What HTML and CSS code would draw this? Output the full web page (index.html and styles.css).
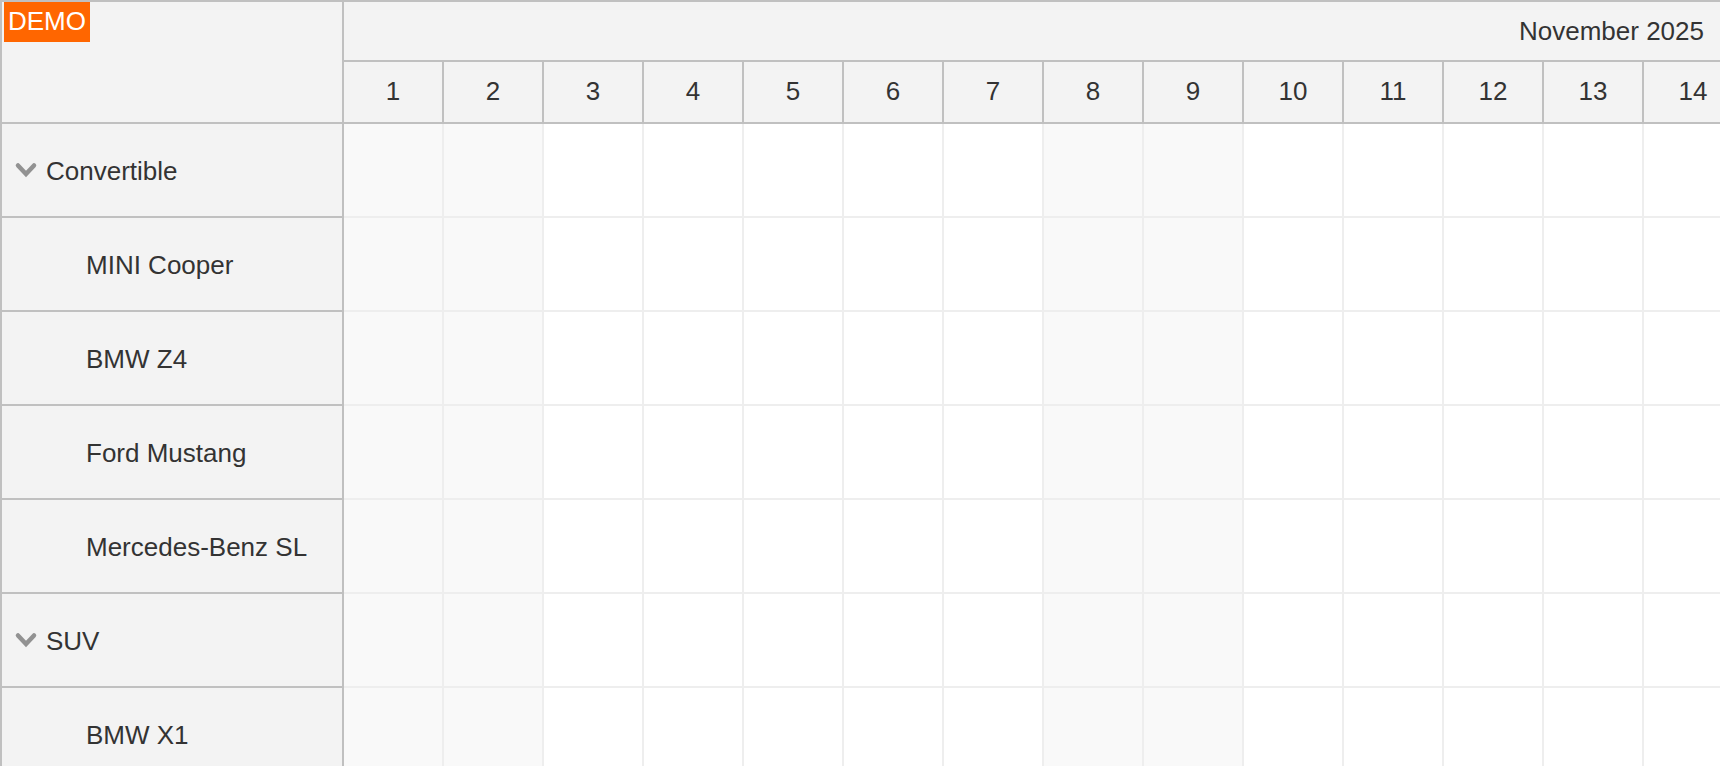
FILE: index.html
```html
<!DOCTYPE html>
<html lang="en">
<head>
    <meta charset="UTF-8">
    <meta name="viewport" content="width=device-width, initial-scale=1.0">
    <title>November 2025</title>
    <link rel="stylesheet" href="styles.css">
</head>
<body>
    <div class="scheduler">
        <div class="demo-badge">DEMO</div>
        <table class="schedule">
            <colgroup>
                <col class="resource-col">
                <col span="14">
            </colgroup>
            <thead>
                <tr class="month-row">
                    <td class="corner" rowspan="2"></td>
                    <th class="month" colspan="14" scope="colgroup">November 2025</th>
                </tr>
                <tr class="day-row" id="days"></tr>
            </thead>
            <tbody id="resources"></tbody>
        </table>
    </div>

    <script>
        const resources = [
            { name: 'Convertible', children: ['MINI Cooper', 'BMW Z4', 'Ford Mustang', 'Mercedes-Benz SL'] },
            { name: 'SUV', children: ['BMW X1'] }
        ];
        const dayCount = 14;

        const chevron = '<svg class="chevron" viewBox="0 0 20 14"><path d="M2 1.5 L10 10 L18 1.5"/></svg>';

        function isWeekend(day) {
            const weekday = new Date(2025, 10, day).getDay();
            return weekday === 0 || weekday === 6;
        }

        function renderCells() {
            let cells = '';
            for (let day = 1; day <= dayCount; day++) {
                cells += `<td class="cell${isWeekend(day) ? ' weekend' : ''}"></td>`;
            }
            return cells;
        }

        function renderHeader() {
            let html = '';
            for (let day = 1; day <= dayCount; day++) {
                html += `<th scope="col">${day}</th>`;
            }
            document.getElementById('days').innerHTML = html;
        }

        function renderResources() {
            let html = '';
            resources.forEach((group, i) => {
                html += `<tr><th class="group" scope="row"><button class="toggle" data-group="${i}" aria-expanded="true">${chevron}${group.name}</button></th>${renderCells()}</tr>`;
                group.children.forEach(name => {
                    html += `<tr data-parent="${i}"><th class="child" scope="row">${name}</th>${renderCells()}</tr>`;
                });
            });
            document.getElementById('resources').innerHTML = html;
        }

        renderHeader();
        renderResources();

        // Expand / collapse a group
        document.querySelectorAll('.toggle').forEach(button => {
            button.addEventListener('click', function() {
                const expanded = button.getAttribute('aria-expanded') === 'true';
                button.setAttribute('aria-expanded', !expanded);
                document.querySelectorAll(`tr[data-parent="${button.dataset.group}"]`).forEach(row => {
                    row.hidden = expanded;
                });
            });
        });
    </script>
</body>
</html>
```
FILE: styles.css
```css
* {
    margin: 0;
    padding: 0;
    box-sizing: border-box;
}

body {
    background: #ffffff;
    color: #333333;
    font-family: "Liberation Sans", Arial, sans-serif;
    font-size: 26px;
    line-height: 30px;
}

.scheduler {
    position: relative;
    height: 100vh;
    overflow: hidden;
    border-top: 2px solid #c0c0c0;
    border-left: 2px solid #c0c0c0;
}

.demo-badge {
    position: absolute;
    top: 0;
    left: 2px;
    padding: 4px 4px 6px;
    background: #ff6600;
    color: #ffffff;
}

.schedule {
    width: 100%;
    min-width: 1742px;
    table-layout: fixed;
    border-collapse: separate;
    border-spacing: 0;
}

.resource-col {
    width: 342px;
}

.schedule th,
.corner {
    background: #f3f3f3;
    border-right: 2px solid #c0c0c0;
    border-bottom: 2px solid #c0c0c0;
    font-weight: normal;
    vertical-align: middle;
}

.month-row {
    height: 60px;
}

.schedule .month {
    padding-right: 38px;
    text-align: right;
}

.day-row {
    height: 62px;
}

.day-row th {
    padding-bottom: 2px;
    text-align: center;
}

tbody tr {
    height: 94px;
}

tbody th {
    padding-top: 2px;
    text-align: left;
}

.group {
    padding-left: 14px;
}

.child {
    padding-left: 84px;
}

.toggle {
    display: flex;
    align-items: center;
    gap: 10px;
    border: none;
    background: none;
    color: inherit;
    font: inherit;
    cursor: pointer;
}

.chevron {
    width: 20px;
    height: 14px;
    fill: none;
    stroke: #929292;
    stroke-width: 4.5;
    stroke-linecap: round;
    overflow: visible;
}

.toggle[aria-expanded="false"] .chevron {
    transform: rotate(-90deg);
}

.cell {
    border-right: 2px solid #eeeeee;
    border-bottom: 2px solid #eeeeee;
}

.weekend {
    background: #f9f9f9;
}
```
